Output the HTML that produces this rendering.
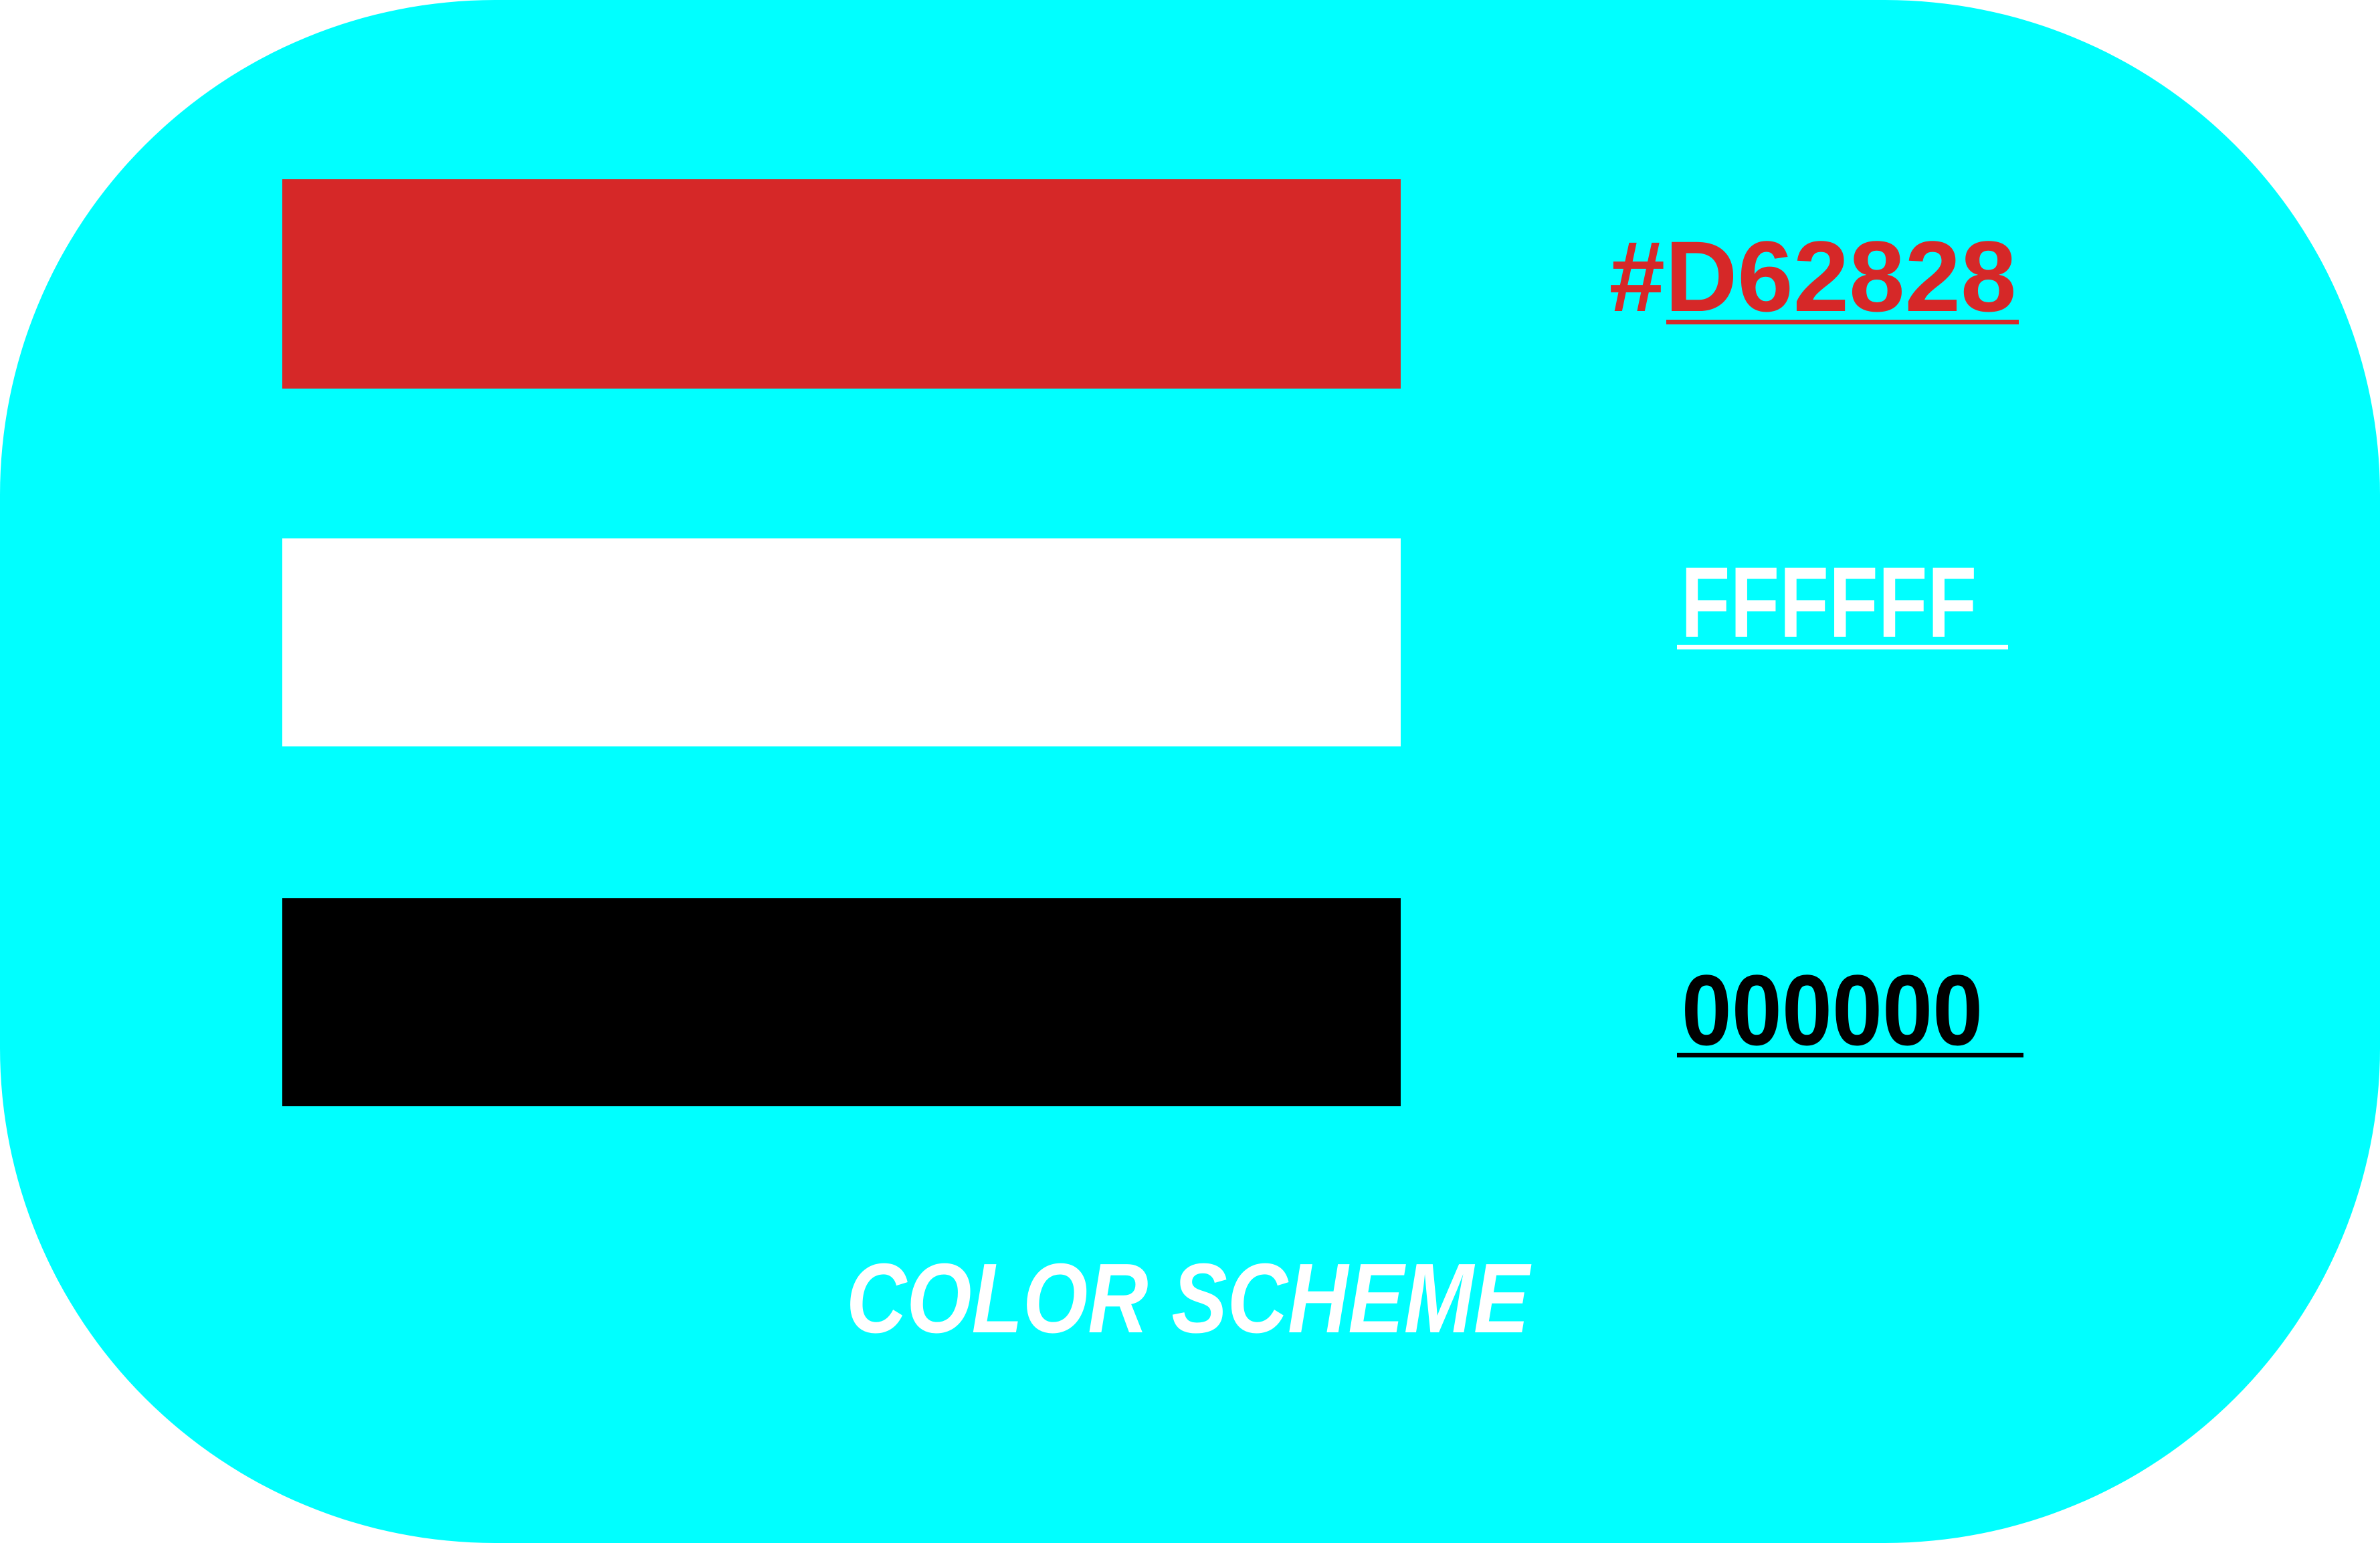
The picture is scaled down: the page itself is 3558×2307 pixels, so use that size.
<!DOCTYPE html>
<html><head><style>
html,body{margin:0;padding:0;background:#fff;}
.card{position:absolute;left:0;top:0;width:3558px;height:2307px;background:#00ffff;border-radius:740px;overflow:hidden;}
.bar{position:absolute;left:422px;width:1672px;}
.t{position:absolute;font-family:"Liberation Sans",sans-serif;font-weight:bold;font-size:150px;line-height:1;white-space:nowrap;text-align:center;}
.u{position:absolute;height:7px;}
</style></head><body>
<div class="card">
<div class="bar" style="top:268px;height:313px;background:#d62828"></div>
<div class="bar" style="top:805px;height:311px;background:#ffffff"></div>
<div class="bar" style="top:1343px;height:311px;background:#000000"></div>

<div class="t" style="left:2380px;width:660px;top:338px;color:#d62828">#D62828</div>
<div class="u" style="left:2491px;width:527px;top:478px;background:#d62828"></div>

<div class="t" style="left:2334px;width:800px;top:825px;color:#ffffff;transform:scaleX(0.805)">FFFFFF</div>
<div class="u" style="left:2507px;width:495px;top:964px;background:#ffffff"></div>

<div class="t" style="left:2339px;width:800px;top:1435px;color:#000000;transform:scaleX(0.9)">000000</div>
<div class="u" style="left:2507px;width:518px;top:1574px;background:#000000"></div>

<div class="t" style="left:1172px;width:1200px;top:1868px;color:#ffffff;font-style:italic;font-size:148px;transform:scaleX(0.845)">COLOR SCHEME</div>
</div>
</body></html>
